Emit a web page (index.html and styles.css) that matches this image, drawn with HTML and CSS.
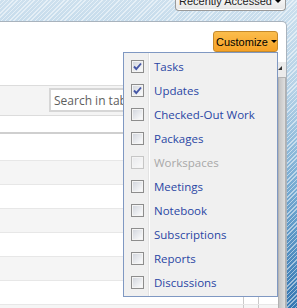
FILE: index.html
```html
<!DOCTYPE html>
<html lang="en">
<head>
    <meta charset="UTF-8">
    <title>Customize</title>
    <link rel="stylesheet" href="styles.css">
</head>
<body>
    <div class="topbar">
        <div class="recent">Recently Accessed <span class="arrow"></span></div>
    </div>

    <div class="panel">
        <div class="main">
            <div class="actions">
                <div class="customize-wrap">
                    <button type="button" class="customize">Customize <span class="arrow"></span></button>

                    <ul class="menu">
                        <li class="item"><span class="chk checked"><svg width="11" height="11" viewBox="0 0 11 11"><path d="M2 5.5 L4.3 8 L9 2.5" fill="none" stroke="#4657a6" stroke-width="1.9"/></svg></span>Tasks</li>
                        <li class="item"><span class="chk checked"><svg width="11" height="11" viewBox="0 0 11 11"><path d="M2 5.5 L4.3 8 L9 2.5" fill="none" stroke="#4657a6" stroke-width="1.9"/></svg></span>Updates</li>
                        <li class="item"><span class="chk"></span>Checked-Out Work</li>
                        <li class="item"><span class="chk"></span>Packages</li>
                        <li class="item disabled"><span class="chk"></span>Workspaces</li>
                        <li class="item"><span class="chk"></span>Meetings</li>
                        <li class="item"><span class="chk"></span>Notebook</li>
                        <li class="item"><span class="chk"></span>Subscriptions</li>
                        <li class="item"><span class="chk"></span>Reports</li>
                        <li class="item"><span class="chk"></span>Discussions</li>
                    </ul>
                </div>
            </div>

            <div class="toolbar">
                <div class="search">Search in table</div>
            </div>

            <div class="table">
                <div class="head"></div>
                <div class="row odd"><span class="cell"></span><span class="cell"></span></div>
                <div class="row"><span class="cell"></span><span class="cell"></span></div>
                <div class="row odd"><span class="cell"></span><span class="cell"></span></div>
                <div class="row"><span class="cell"></span><span class="cell"></span></div>
                <div class="row odd"><span class="cell"></span><span class="cell"></span></div>
                <div class="row"><span class="cell"></span><span class="cell"></span></div>
                <div class="row odd"><span class="cell"></span><span class="cell"></span></div>
            </div>
        </div>

        <div class="vscroll">
            <div class="up"></div>
            <div class="thumb"></div>
        </div>
    </div>
</body>
</html>
```

FILE: styles.css
```css
body {
    margin: 0;
    height: 308px;
    overflow: hidden;
    font-family: "Liberation Sans", Arial, sans-serif;
    background:
        repeating-linear-gradient(135deg, rgba(255, 255, 255, 0.5) 0 1px, rgba(255, 255, 255, 0) 1px 3px),
        linear-gradient(#cde0ee 0, #b4d1e6 90px, #74a9d1 190px, #3577b2 308px);
}
.topbar {
    height: 21px;
    display: flex;
    justify-content: flex-end;
    padding-right: 11px;
}
.recent {
    margin-top: -8px;
    height: 18px;
    width: 106px;
    padding-left: 3px;
    display: flex;
    align-items: center;
    font-size: 11px;
    color: #222;
    border: 1px solid #9a9a9a;
    border-top: none;
    border-radius: 0 0 4px 4px;
    background: linear-gradient(#ffffff, #e6e6e6);
    box-shadow: inset 0 -1px 0 #fff;
}
.recent .arrow {
    margin-left: 3px;
}
.arrow {
    display: inline-block;
    width: 0;
    height: 0;
    border-left: 3px solid transparent;
    border-right: 3px solid transparent;
    border-top: 3px solid #000;
    vertical-align: middle;
}

.panel {
    display: flex;
    height: 286px;
    overflow: hidden;
    margin: 0 10px 0 -1px;
    background: #fff;
    border: 1px solid #a9b3bd;
    border-bottom: none;
    border-radius: 0 5px 0 0;
}
.main {
    flex: 1;
    min-width: 0;
}
.actions {
    height: 63px;
    display: flex;
    justify-content: flex-end;
    align-items: flex-start;
}
.customize-wrap {
    position: relative;
    margin-top: 9px;
}
.customize {
    display: flex;
    align-items: center;
    height: 21px;
    width: 65px;
    padding: 0 0 0 2px;
    font-family: "Liberation Sans", Arial, sans-serif;
    font-size: 11px;
    color: #000;
    background: linear-gradient(#fbbd4c, #f6a226);
    border: 1px solid #c48a2c;
    border-radius: 3px;
}
.customize .arrow {
    margin-left: 3px;
}

.menu {
    position: absolute;
    top: 100%;
    right: 0;
    z-index: 2;
    width: 153px;
    margin: 0;
    padding: 1px 0 2px;
    list-style: none;
    border: 1px solid #7f98c2;
    background: linear-gradient(to right, #f0f0f0 24px, #e3e3e3 24px, #e3e3e3 25px, #ffffff 25px, #ffffff 26px, #f0f0f0 26px);
}
.item {
    display: flex;
    align-items: center;
    height: 24px;
    font-family: "Open Sans", "DejaVu Sans", sans-serif;
    font-size: 11.5px;
    color: #2a46a4;
}
.item.disabled {
    color: #a8a8a8;
}
.chk {
    box-sizing: border-box;
    width: 13px;
    height: 13px;
    margin: 0 10px 0 7px;
    display: flex;
    align-items: center;
    justify-content: center;
    border: 1px solid #8d8d8d;
    background: linear-gradient(135deg, #cfd3db, #ffffff);
    box-shadow: inset 0 0 0 1px #f4f4f4;
}
.disabled .chk {
    border-color: #c6c6c6;
    background: linear-gradient(135deg, #e8e9ec, #fafafa);
}

.toolbar {
    height: 27px;
    border-top: 1px solid #dcdcdc;
    border-bottom: 1px solid #dcdcdc;
    background: #f4f4f4;
    padding: 2px 0 0 49px;
    box-sizing: content-box;
}
.search {
    box-sizing: border-box;
    width: 170px;
    height: 24px;
    padding-left: 3px;
    display: flex;
    align-items: center;
    font-family: "Open Sans", "DejaVu Sans", sans-serif;
    font-size: 12px;
    color: #5e5e5e;
    background: #fff;
    border: 2px solid #d6d6d6;
    white-space: nowrap;
    overflow: hidden;
}
.table {
    margin-top: 16px;
    border-top: 2px solid #cfcfcf;
}
.head {
    height: 26px;
}
.row {
    display: flex;
    justify-content: flex-end;
    height: 23px;
    border-top: 1px solid #e7e7e7;
}
.row.odd {
    background: #f5f5f5;
}
.cell {
    width: 14px;
    border-left: 1px solid #cacaca;
}
.cell:last-child {
    width: 19px;
}

.vscroll {
    width: 8px;
    margin-top: 40px;
    background: #ebebeb;
    display: flex;
    flex-direction: column;
}
.up {
    height: 15px;
    position: relative;
}
.up::after {
    content: "";
    position: absolute;
    left: 0;
    top: 4px;
    border-left: 4px solid transparent;
    border-bottom: 4px solid #333;
}
.thumb {
    flex: 1;
    border: 1px solid #b2b2b2;
    border-bottom: none;
    background: linear-gradient(to right, #c4c4c4, #dedede);
}
```
